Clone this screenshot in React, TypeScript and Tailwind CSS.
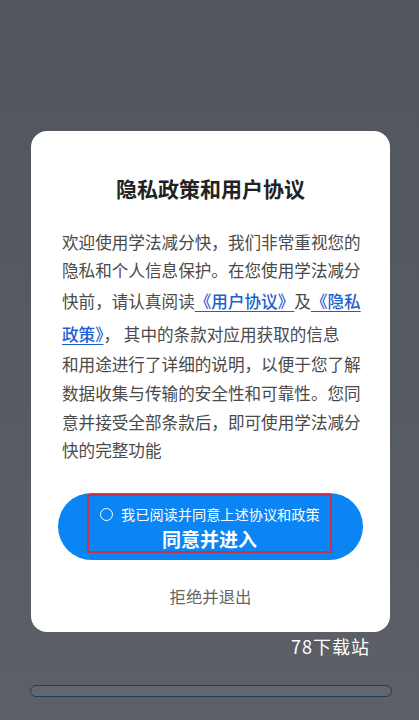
export default function App() {
  const cjk = { fontFamily: '"Noto Sans CJK SC", "Noto Sans", sans-serif' };

  return (
    <div
      className="h-[720px] w-[419px] overflow-hidden bg-gradient-to-b from-[#51565d] via-[#565a61] to-[#5d6066] flex flex-col"
      style={cjk}
    >
      {/* Dialog card */}
      <div className="mt-[131px] ml-[31px] w-[359px] rounded-[16px] bg-white flex flex-col pt-[42px] pb-[24px]">
        <h1 className="h-[30px] leading-[30px] text-center text-[21px] font-bold text-[#222]">
          隐私政策和用户协议
        </h1>

        <div className="mt-[25px] pl-[31px] text-[16.6px] text-[#4a4a4a] whitespace-nowrap">
          <div className="h-[28px] leading-[28px]">欢迎使用学法减分快，我们非常重视您的</div>
          <div className="h-[29px] leading-[29px]">隐私和个人信息保护。在您使用学法减分</div>
          <div className="h-[33px] leading-[33px]">
            快前，请认真阅读
            <span className="text-[#1e5fd0] font-medium underline underline-offset-[3px] decoration-1">《用户协议》</span>
            及
            <span className="text-[#1e5fd0] font-medium underline underline-offset-[3px] decoration-1">《隐私</span>
          </div>
          <div className="h-[32px] leading-[32px]">
            <span className="text-[#1e5fd0] font-medium underline underline-offset-[3px] decoration-1">政策》</span>
            ， 其中的条款对应用获取的信息
          </div>
          <div className="h-[29px] leading-[29px]">和用途进行了详细的说明，以便于您了解</div>
          <div className="h-[29px] leading-[29px]">数据收集与传输的安全性和可靠性。您同</div>
          <div className="h-[28px] leading-[28px]">意并接受全部条款后，即可使用学法减分</div>
          <div className="h-[28px] leading-[28px]">快的完整功能</div>
        </div>

        {/* Agree button */}
        <div className="mt-[29px] ml-[27px] w-[305px] h-[67px] rounded-full bg-[#0b84f4] flex pl-[29px]">
          <div className="mt-[1px] w-[245px] h-[59px] border-2 border-[#c2344c] flex flex-col text-white">
            <div className="h-[36px] flex items-center pl-[11px] gap-[8px] pt-[2px]">
              <span className="w-[13px] h-[13px] rounded-full border-[1.5px] border-white" />
              <span className="text-[14.2px] leading-none">我已阅读并同意上述协议和政策</span>
            </div>
            <div className="-mt-[4px] text-center text-[19px] font-bold leading-[24px]">同意并进入</div>
          </div>
        </div>

        <div className="mt-[24px] h-[24px] leading-[24px] text-center text-[16.4px] text-[#666]">
          拒绝并退出
        </div>
      </div>

      {/* Watermark */}
      <div className="mt-[2px] h-[24px] leading-[24px] text-right pr-[49px] text-[18px] text-white tracking-[1px]">
        78下载站
      </div>

      {/* Bottom bar */}
      <div className="mt-[27px] ml-[30px] w-[362px] h-[12px] rounded-full border-[1.5px] border-[#1f3b5c] bg-[#63666d]" />
    </div>
  );
}
